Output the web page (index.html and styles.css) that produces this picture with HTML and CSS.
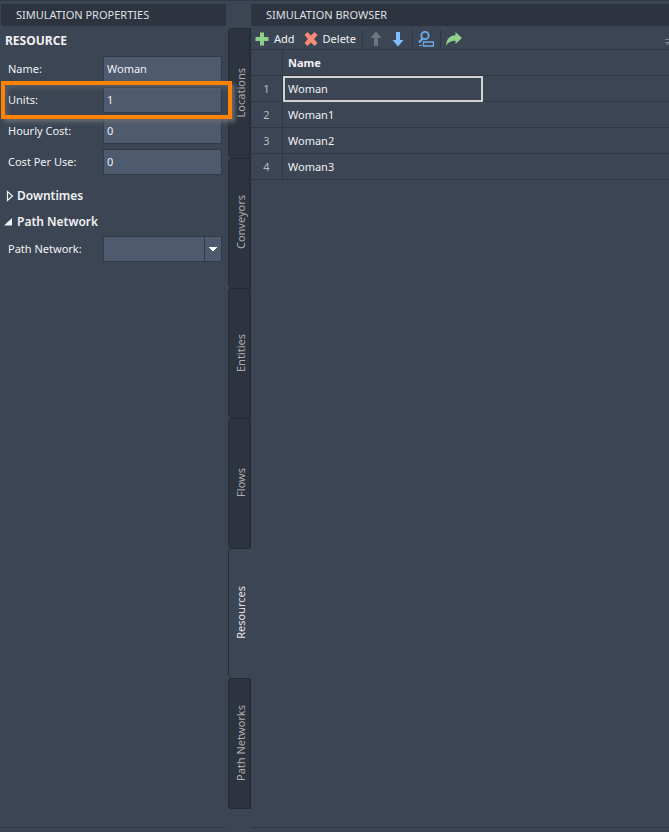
FILE: index.html
```html
<!DOCTYPE html>
<html lang="en">
<head>
<meta charset="utf-8">
<title>Simulation</title>
<link rel="stylesheet" href="styles.css">
</head>
<body>
<main class="workspace">
  <section class="panel properties">
    <h1 class="panel-title">SIMULATION PROPERTIES</h1>
    <form class="panel-body">
      <h2 class="object-type">RESOURCE</h2>
      <div class="fields">
        <div class="field"><label for="name">Name:</label><input id="name" type="text" value="Woman"></div>
        <div class="field highlighted"><label for="units">Units:</label><input id="units" type="text" value="1"></div>
        <div class="field"><label for="hourly">Hourly Cost:</label><input id="hourly" type="text" value="0"></div>
        <div class="field"><label for="per-use">Cost Per Use:</label><input id="per-use" type="text" value="0"></div>
      </div>
      <details class="group">
        <summary><svg class="marker" viewBox="0 0 10 12"><path d="M3.500 1.500v9L8.500 6z" fill="none" stroke="currentColor" stroke-width="1.200"/></svg>Downtimes</summary>
      </details>
      <details class="group" open>
        <summary><svg class="marker" viewBox="0 0 10 12"><path d="M8 2v7.500H0z" fill="currentColor"/></svg>Path Network</summary>
        <div class="field">
          <label for="network">Path Network:</label>
          <select id="network"><option></option></select>
        </div>
      </details>
    </form>
  </section>
  <nav class="tabs">
    <button type="button" class="tab">Locations</button>
    <button type="button" class="tab">Conveyors</button>
    <button type="button" class="tab">Entities</button>
    <button type="button" class="tab">Flows</button>
    <button type="button" class="tab active">Resources</button>
    <button type="button" class="tab">Path Networks</button>
  </nav>
  <section class="panel browser">
    <h1 class="panel-title">SIMULATION BROWSER</h1>
    <div class="panel-body">
      <div class="toolbar">
        <button type="button" class="tool"><svg viewBox="0 0 16 16"><path d="M6 1.500h4V6h4.500v4H10v4.500H6V10H1.500V6H6z" fill="#8fd28c"/></svg>Add</button>
        <button type="button" class="tool"><svg viewBox="0 0 16 16"><path d="M4.500 1 8 4.500 11.500 1 14.500 4 11 8l3.500 4-3 3L8 11.500 4.500 15l-3-3L5 8 1.500 4z" fill="#f58b78"/></svg>Delete</button>
        <span class="separator"></span>
        <button type="button" class="tool" aria-label="Move up" disabled><svg viewBox="0 0 16 16"><path d="M8 .5l5.500 6.500H10v8H6V7H2.500z" fill="#6d747e"/></svg></button>
        <button type="button" class="tool" aria-label="Move down"><svg viewBox="0 0 16 16"><path d="M8 15.500 2.500 9H6V1h4v8h3.500z" fill="#7cbcff"/></svg></button>
        <span class="separator"></span>
        <button type="button" class="tool" aria-label="Find"><svg viewBox="0 0 16 16" fill="none" stroke="#6eaae8"><circle cx="7" cy="4.500" r="3.700" stroke-width="1.800"/><path d="M4.500 7.500 1 11.500" stroke-width="2.200"/><path d="M1 14.500h3" stroke-width="1"/><path d="M5.500 11h10v4h-10z" stroke-width="1.300"/></svg></button>
        <span class="separator"></span>
        <button type="button" class="tool" aria-label="Go to"><svg viewBox="0 0 16 16"><path d="M9.500 1 16 7l-6.500 6V9.800C6 9.600 2.500 11 .2 14.500 .2 8 4 4.500 9.500 4.200z" fill="#8fd28c"/></svg></button>
        <svg class="overflow" viewBox="0 0 4 6"><path d="M0 .5h4M0 3.500h4M1 5h3" stroke="#77808c"/></svg>
      </div>
      <table class="grid">
        <thead><tr><th class="index" aria-label="Row"></th><th>Name</th></tr></thead>
        <tbody>
          <tr><td class="index">1</td><td class="selected"><span>Woman</span></td></tr>
          <tr><td class="index">2</td><td>Woman1</td></tr>
          <tr><td class="index">3</td><td>Woman2</td></tr>
          <tr><td class="index">4</td><td>Woman3</td></tr>
        </tbody>
      </table>
    </div>
  </section>
</main>
</body>
</html>
```
FILE: styles.css
```css
:root {
  --surface: #3c4553;
  --dark: #2e343f;
  --line: #2f3743;
  --input: #4e5a6d;
  --edge: #333b48;
  --text: #f0f1f3;
}
* { box-sizing: border-box; }
body {
  margin: 0;
  background: var(--surface);
  color: var(--text);
  font: 11px/16px "Noto Sans", "Open Sans", sans-serif;
}
button, input, select { font: inherit; color: inherit; }
.workspace {
  display: grid;
  grid-template-columns: 226px 25px 1fr;
  min-height: 100vh;
  padding: 3px 0 4px;
  border-top: 1px solid var(--line);
}
.panel { display: flex; flex-direction: column; min-width: 0; }
.panel-title {
  margin: 0;
  padding: 3px 15px;
  background: var(--dark);
  font-size: 11px;
  font-weight: 400;
  color: #dfe1e4;
}
.properties .panel-title { margin-left: 1px; }
.panel-body { flex: 1; border-bottom: 1px solid var(--line); }
.object-type { margin: 0; padding: 7px 5px; font-size: 12px; line-height: 16px; font-weight: 700; }
.fields { display: grid; gap: 5px; }
.field {
  display: grid;
  grid-template-columns: 95px 1fr;
  align-items: center;
  padding: 0 4px 0 8px;
  position: relative;
}
.field input, .field select {
  width: 100%;
  height: 26px;
  padding: 0 3px 1px;
  border: 1px solid var(--edge);
  border-radius: 0;
  background-color: var(--input);
  outline: none;
}
.field select {
  appearance: none;
  background-image:
    linear-gradient(to bottom right, #fff 50%, transparent 50%),
    linear-gradient(to bottom left, #fff 50%, transparent 50%),
    linear-gradient(var(--edge), var(--edge));
  background-position: right 4px top 10px, right 8px top 10px, right 16px top;
  background-size: 4px 5px, 4px 5px, 1px 100%;
  background-repeat: no-repeat;
}
.highlighted::after {
  content: "";
  position: absolute;
  inset: -6px -6px -6px 1px;
  border: 4px solid #ff8200;
  box-shadow: 3px 3px 4px #666a70, inset 3px 3px 4px #666a7099;
  z-index: 1;
  pointer-events: none;
}
.group summary {
  display: flex;
  align-items: center;
  gap: 3px;
  height: 26px;
  padding-left: 4px;
  font-size: 12px;
  font-weight: 600;
  list-style: none;
}
.fields + .group { margin-top: 8px; }
.group .field { margin-top: 1px; }
.marker { width: 10px; height: 12px; }
.tabs { padding: 24px 0 0 2px; }
.tab {
  display: grid;
  place-items: center;
  width: 100%;
  height: 130px;
  padding: 0 0 2px 4px;
  border: 1px solid #252c36;
  border-right-width: 2px;
  border-bottom-width: 0;
  border-radius: 4px 0 0 4px;
  background: var(--dark);
  color: #a9adb4;
  writing-mode: sideways-lr;
}
.tab:last-child { border-bottom-width: 1px; height: 131px; }
.tab.active { background: var(--surface); border-right-color: transparent; color: #e4e6e9; }
.toolbar {
  display: flex;
  align-items: center;
  height: 24px;
  padding: 2px 0 0 3px;
  border-bottom: 1px solid var(--line);
}
.tool {
  display: flex;
  align-items: center;
  gap: 4px;
  padding: 0 3px;
  border: 0;
  background: none;
}
.tool:first-child { padding-left: 0; padding-right: 5px; }
.tool svg { width: 16px; height: 16px; }
.separator { width: 1px; height: 18px; margin: 0 2px 0 3px; background: var(--line); }
.overflow { width: 4px; height: 6px; margin: 6px 0 0 auto; }
.grid { width: 100%; border-collapse: separate; border-spacing: 0; }
.grid th, .grid td { height: 26px; padding: 0 5px; border-bottom: 1px solid var(--line); text-align: left; }
.grid .index { width: 32px; border-right: 1px solid var(--line); text-align: center; color: #b9bdc4; }
.grid .selected { padding: 0; }
.selected span {
  display: block;
  width: 200px;
  height: 26px;
  margin-bottom: -1px;
  padding: 3px;
  border: 2px solid #d3d2d2;
}
```
